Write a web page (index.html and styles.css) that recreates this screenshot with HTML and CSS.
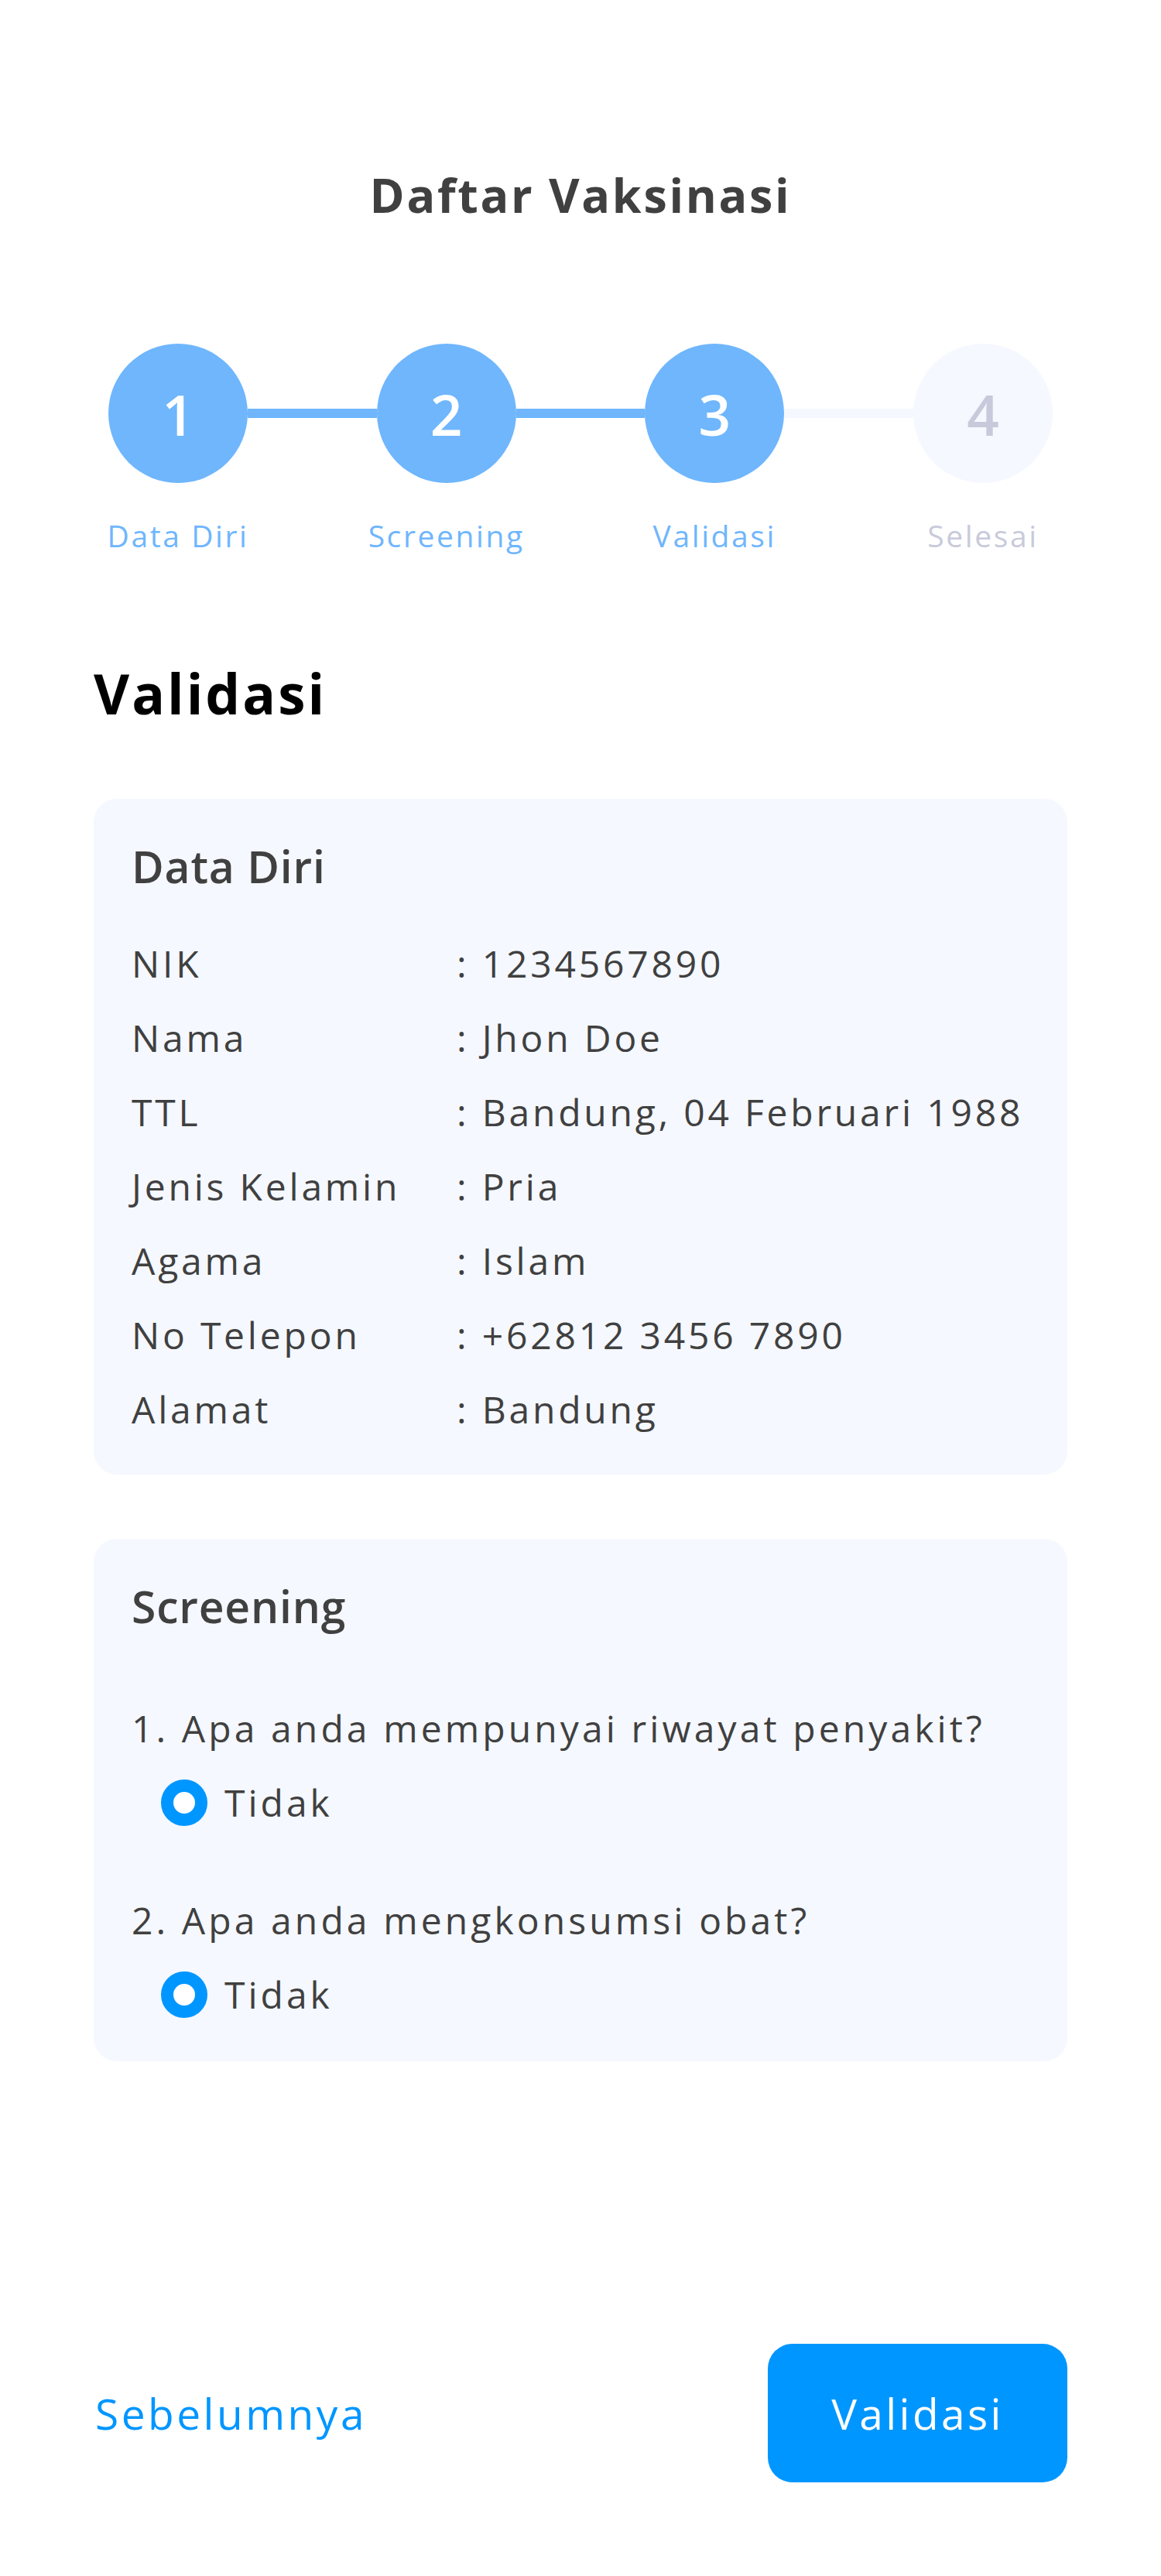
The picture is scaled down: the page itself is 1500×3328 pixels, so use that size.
FILE: index.html
```html
<!DOCTYPE html>
<html lang="id">
<head>
<meta charset="utf-8">
<title>Daftar Vaksinasi</title>
<link rel="stylesheet" href="styles.css">
</head>
<body>
<div class="page">
  <h1 class="title">Daftar Vaksinasi</h1>

  <div class="stepper">
    <div class="track">
      <div class="dot done">1</div>
      <div class="bar done"></div>
      <div class="dot done">2</div>
      <div class="bar done"></div>
      <div class="dot done">3</div>
      <div class="bar"></div>
      <div class="dot">4</div>
    </div>
    <div class="labels">
      <span class="lbl done">Data Diri</span>
      <span class="lbl done">Screening</span>
      <span class="lbl done">Validasi</span>
      <span class="lbl">Selesai</span>
    </div>
  </div>

  <h2 class="section-title">Validasi</h2>

  <section class="card">
    <h3 class="card-title">Data Diri</h3>
    <div class="info">
      <div class="row"><span class="key">NIK</span><span class="val">: 1234567890</span></div>
      <div class="row"><span class="key">Nama</span><span class="val">: Jhon Doe</span></div>
      <div class="row"><span class="key">TTL</span><span class="val">: Bandung, 04 Februari 1988</span></div>
      <div class="row"><span class="key">Jenis Kelamin</span><span class="val">: Pria</span></div>
      <div class="row"><span class="key">Agama</span><span class="val">: Islam</span></div>
      <div class="row"><span class="key">No Telepon</span><span class="val">: +62812 3456 7890</span></div>
      <div class="row"><span class="key">Alamat</span><span class="val">: Bandung</span></div>
    </div>
  </section>

  <section class="card card-screening">
    <h3 class="card-title">Screening</h3>
    <div class="question first">
      <p class="q-text">1. Apa anda mempunyai riwayat penyakit?</p>
      <div class="answer"><span class="radio"></span><span>Tidak</span></div>
    </div>
    <div class="question">
      <p class="q-text">2. Apa anda mengkonsumsi obat?</p>
      <div class="answer"><span class="radio"></span><span>Tidak</span></div>
    </div>
  </section>

  <div class="actions">
    <a class="prev" href="#">Sebelumnya</a>
    <button class="primary" type="button">Validasi</button>
  </div>
</div>
</body>
</html>
```

FILE: styles.css
```css
* { box-sizing: border-box; }
body {
  margin: 0;
  background: #ffffff;
  font-family: "Open Sans", "Noto Sans", sans-serif;
  color: #404040;
}
.page {
  width: 1500px;
  padding: 212px 121px 0;
}
.title {
  margin: 0;
  text-align: center;
  font-size: 61px;
  line-height: 80px;
  font-weight: 700;
  letter-spacing: 2.7px;
  color: #404040;
}
.stepper {
  margin: 152px 19px 0;
}
.track {
  display: flex;
  align-items: center;
}
.dot {
  width: 180px;
  height: 180px;
  border-radius: 50%;
  background: #f5f8fe;
  color: #c8cadb;
  display: flex;
  align-items: center;
  justify-content: center;
  font-size: 73px;
  font-weight: 600;
  flex: none;
}
.dot.done { background: #6fb6fd; color: #ffffff; }
.bar {
  flex: 1;
  height: 12px;
  background: #f5f8fe;
}
.bar.done { background: #6fb6fd; }
.labels {
  margin-top: 43px;
  display: flex;
  justify-content: space-between;
}
.lbl {
  width: 180px;
  display: flex;
  justify-content: center;
  white-space: nowrap;
  font-size: 39px;
  line-height: 50px;
  letter-spacing: 2.6px;
  color: #c8cadb;
}
.lbl.done { color: #6fb6fd; }
.section-title {
  margin: 134px 0 0;
  font-size: 71px;
  line-height: 90px;
  font-weight: 700;
  letter-spacing: 3px;
  color: #000000;
}
.card {
  margin-top: 91px;
  background: #f5f8fe;
  border-radius: 30px;
  padding: 52px 49px 36px;
}
.card-screening { margin-top: 83px; padding-bottom: 38px; }
.card-title {
  margin: 0;
  font-size: 57px;
  line-height: 70px;
  font-weight: 600;
  letter-spacing: 0.8px;
  color: #404040;
}
.info { margin-top: 43px; }
.row {
  display: flex;
  font-size: 48px;
  line-height: 96px;
  letter-spacing: 3.8px;
}
.key { width: 420px; flex: none; }
.question { margin-top: 56px; }
.question.first { margin-top: 75px; }
.q-text {
  margin: 0;
  font-size: 48px;
  line-height: 96px;
  letter-spacing: 4.1px;
}
.answer {
  display: flex;
  align-items: center;
  padding-left: 38px;
  gap: 22px;
  font-size: 48px;
  line-height: 96px;
  letter-spacing: 4px;
}
.radio {
  width: 60px;
  height: 60px;
  border-radius: 50%;
  border: 16px solid #0096ff;
  background: #ffffff;
  flex: none;
}
.actions {
  margin-top: 365px;
  display: flex;
  justify-content: space-between;
  align-items: center;
}
.prev {
  margin-left: 2px;
  font-size: 55px;
  font-weight: 500;
  letter-spacing: 3.5px;
  color: #0096ff;
  text-decoration: none;
}
.primary {
  width: 387px;
  height: 179px;
  border: 0;
  border-radius: 32px;
  background: #0096ff;
  color: #ffffff;
  font-family: inherit;
  font-size: 55px;
  font-weight: 500;
  letter-spacing: 3.4px;
}
```
